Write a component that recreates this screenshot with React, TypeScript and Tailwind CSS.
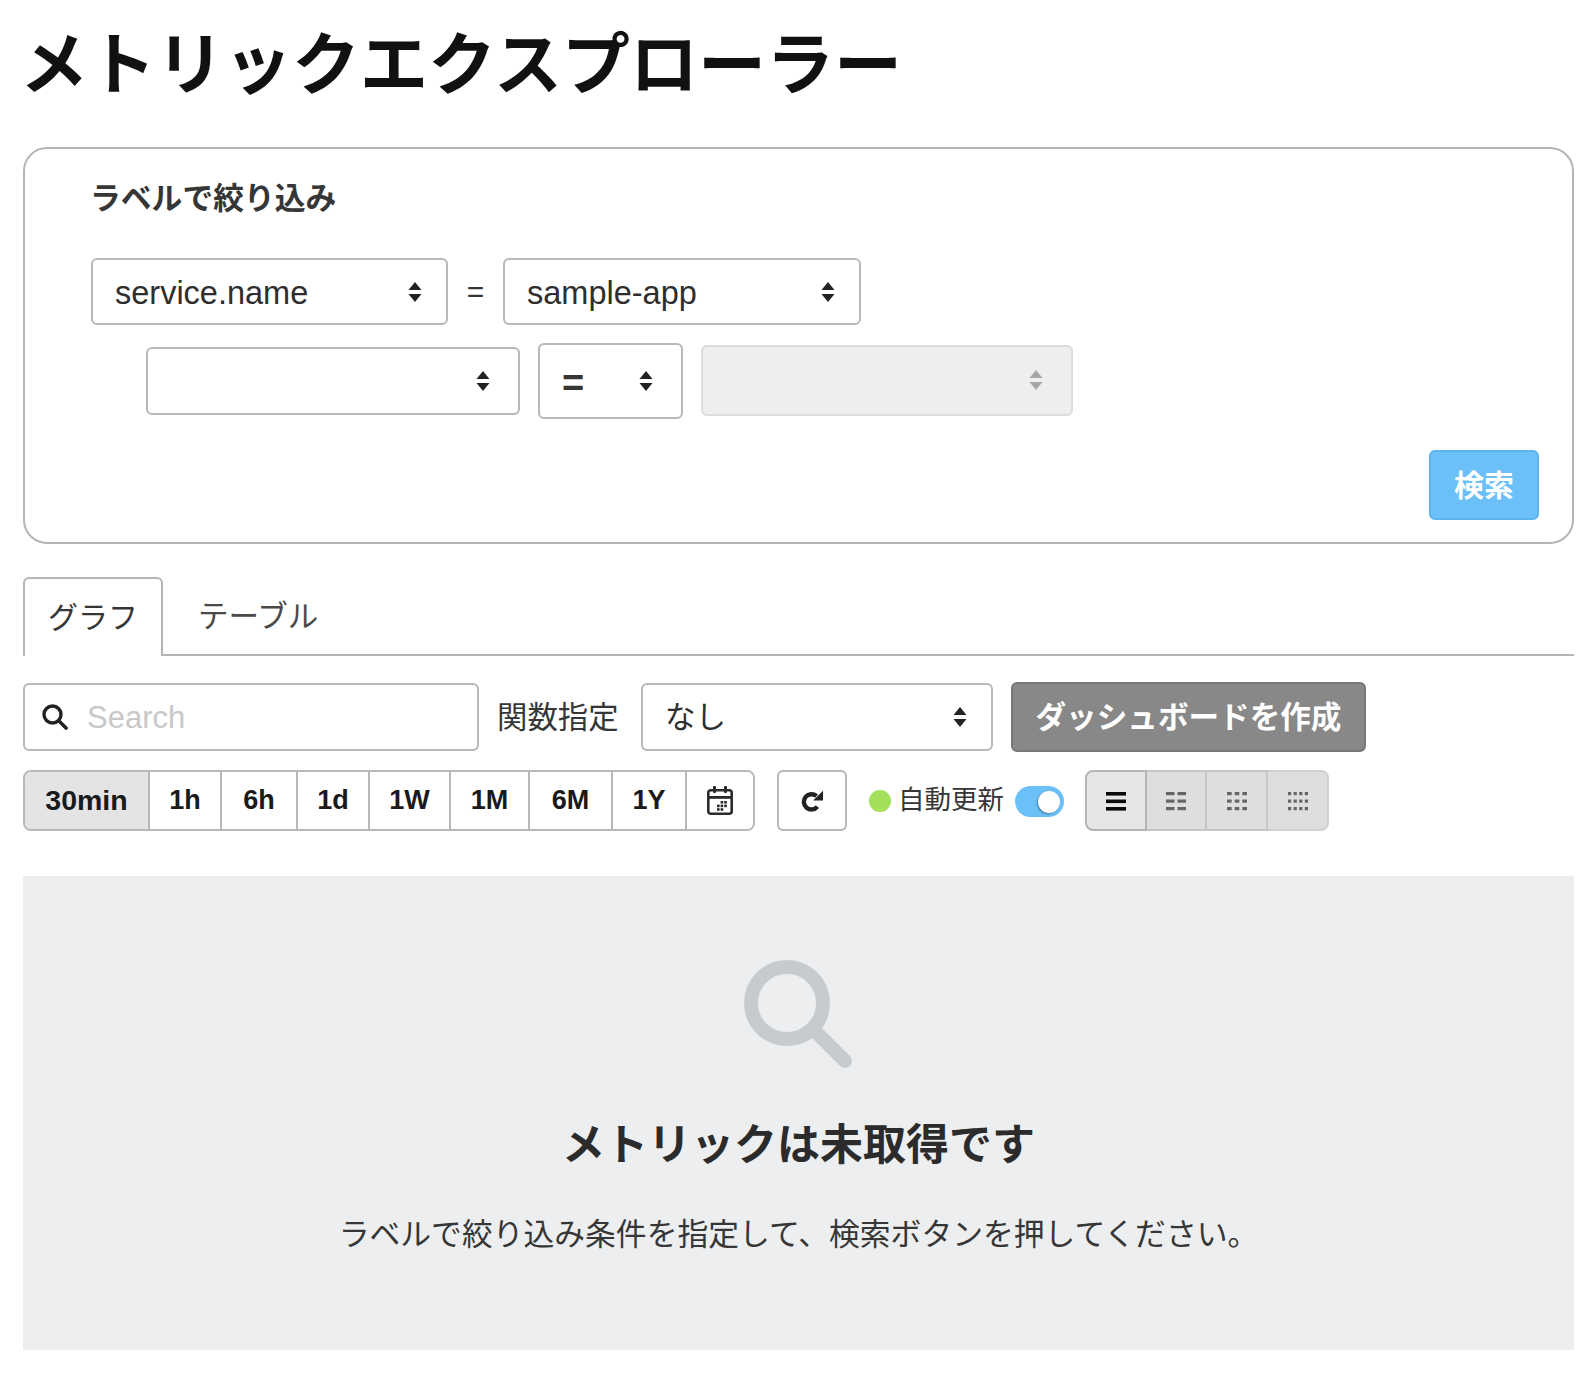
const FONT = "font-['Liberation_Sans','Noto_Sans_CJK_JP',sans-serif]";

const timeRanges = [
  { label: '30min', width: 'w-[125px] text-[28.5px] bg-[#e4e4e4]' },
  { label: '1h', width: 'w-[72px] text-[27px] bg-white' },
  { label: '6h', width: 'w-[76px] text-[27px] bg-white' },
  { label: '1d', width: 'w-[72px] text-[27px] bg-white' },
  { label: '1W', width: 'w-[81px] text-[27px] bg-white' },
  { label: '1M', width: 'w-[79px] text-[27px] bg-white' },
  { label: '6M', width: 'w-[83px] text-[27px] bg-white' },
  { label: '1Y', width: 'w-[74px] text-[27px] bg-white' },
];

function Arrows({ disabled }: { disabled?: boolean }) {
  return (
    <svg width="14" height="20" viewBox="0 0 14 20" className={disabled ? 'text-[#a8a8a8]' : 'text-[#222]'}>
      <path d="M7 0 L13.5 8 L0.5 8 Z M7 20 L13.5 12 L0.5 12 Z" fill="currentColor" />
    </svg>
  );
}

function SelectBox({
  value,
  className,
  disabled,
  arrowClass,
  valueClass = 'text-[32.5px] pt-[4px]',
}: {
  value?: string;
  className: string;
  disabled?: boolean;
  arrowClass: string;
  valueClass?: string;
}) {
  return (
    <div
      className={`flex items-center justify-between rounded-[6px] border-2 pl-[22px] ${arrowClass} ${
        disabled ? 'border-[#dcdcdc] bg-[#eeeeee]' : 'border-[#b8b8b8] bg-white'
      } ${className}`}
    >
      <span className={`leading-none text-[#2e2e2e] ${valueClass}`}>{value}</span>
      <Arrows disabled={disabled} />
    </div>
  );
}

function ViewIcon({ cols, active }: { cols: number; active?: boolean }) {
  const gap = cols === 1 ? 0 : cols === 4 ? 2.4 : 3;
  const w = (20 - gap * (cols - 1)) / cols;
  return (
    <svg width="20" height="20" viewBox="0 0 20 20" className={active ? 'text-[#0a0a0a]' : 'text-[#666]'}>
      {[1, 8.5, 16].map((y) =>
        Array.from({ length: cols }).map((_, i) => (
          <rect key={`${y}-${i}`} x={i * (w + gap)} y={y} width={w} height={active ? 3.6 : 3.2} fill="currentColor" />
        ))
      )}
    </svg>
  );
}

function CalendarIcon() {
  const dots = [
    [1, 0],
    [2, 0],
    [0, 1],
    [1, 1],
    [2, 1],
    [0, 2],
    [1, 2],
  ];
  return (
    <svg width="26" height="29" viewBox="0 0 26 29" fill="none" className="text-[#2b2b2b]">
      <rect x="1.3" y="4.3" width="23.4" height="23.4" rx="2.5" stroke="currentColor" strokeWidth="2.6" />
      <rect x="1" y="10" width="24" height="2.8" fill="currentColor" />
      <rect x="6" y="0" width="3" height="7" rx="1" fill="currentColor" />
      <rect x="17" y="0" width="3" height="7" rx="1" fill="currentColor" />
      {dots.map(([c, r]) => (
        <rect key={`${c}-${r}`} x={10 + c * 3.6} y={15 + r * 3.6} width="2.6" height="2.6" fill="currentColor" />
      ))}
    </svg>
  );
}

function RefreshIcon() {
  return (
    <svg width="22" height="22" viewBox="0 0 22 22" fill="none" className="text-[#222]">
      <path d="M15.5 6.2 A7.6 7.6 0 1 0 16.4 16.6" stroke="currentColor" strokeWidth="4.4" />
      <path d="M22 0.8 L22 10.6 L12.2 10.6 Z" fill="currentColor" />
    </svg>
  );
}

export default function App() {
  return (
    <div className={`${FONT} min-h-screen bg-white pb-[25px] pl-[23px] pr-[22px] pt-[25px] text-[#363636]`}>
      <h1 className="-ml-[3px] mb-[42px] text-[68px] font-bold leading-[80px] text-[#111]">
        メトリックエクスプローラー
      </h1>

      <section className="rounded-[24px] border-2 border-[#b5b5b5] pb-[22px] pl-[66px] pr-[33px] pt-[30px]">
        <h2 className="-ml-[1px] text-[30.8px] font-bold leading-[40px] text-[#363636]">ラベルで絞り込み</h2>

        <div className="mt-[39px] flex items-center">
          <SelectBox value="service.name" className="h-[67px] w-[357px]" arrowClass="pr-[24px]" />
          <span className="w-[55px] text-center text-[30px] leading-none text-[#363636]">=</span>
          <SelectBox value="sample-app" className="h-[67px] w-[358px]" arrowClass="pr-[24px]" />
        </div>

        <div className="ml-[55px] mt-[18px] flex items-center">
          <SelectBox className="h-[68px] w-[374px]" arrowClass="pr-[28px]" />
          <SelectBox
            value="="
            className="ml-[18px] h-[76px] w-[145px]"
            arrowClass="pr-[28px]"
            valueClass="text-[38px] font-bold pt-[4px] text-[#363636]"
          />
          <SelectBox disabled className="mb-[2px] ml-[18px] h-[71px] w-[372px]" arrowClass="pr-[28px]" />
        </div>

        <div className="mt-[31px] flex justify-end">
          <button className="h-[70px] w-[110px] rounded-[6px] border-2 border-[#5cb3ee] bg-[#6cc0f8] text-[30px] font-bold text-white">
            検索
          </button>
        </div>
      </section>

      <div className="mt-[33px] flex h-[79px] border-b-2 border-[#b5b5b5]">
        <div className="flex h-[79px] w-[140px] items-center justify-center rounded-t-[6px] border-2 border-b-0 border-[#b5b5b5] bg-white text-[30px] text-[#363636]">
          グラフ
        </div>
        <div className="flex h-[77px] items-center pl-[35px] pt-[3px] text-[30.5px] text-[#4a4a4a]">テーブル</div>
      </div>

      <div className="mt-[26px] flex items-center">
        <div className="flex h-[68px] w-[456px] items-center gap-[19px] rounded-[6px] border-2 border-[#b8b8b8] bg-white pl-[17px]">
          <svg width="26" height="26" viewBox="0 0 26 26" fill="none" className="text-[#222]">
            <circle cx="10.5" cy="10.5" r="8.5" stroke="currentColor" strokeWidth="3.4" />
            <path d="M17 17 L24 24" stroke="currentColor" strokeWidth="3.6" strokeLinecap="round" />
          </svg>
          <span className="text-[31px] leading-none text-[#c8c8c8]">Search</span>
        </div>
        <span className="ml-[18px] w-[144px] text-[30.4px] leading-none text-[#363636]">関数指定</span>
        <SelectBox value="なし" className="h-[68px] w-[352px]" arrowClass="pr-[24px]" valueClass="text-[30.5px]" />
        <button className="ml-[18px] h-[70px] w-[355px] rounded-[6px] border-2 border-[#777777] bg-[#888888] pt-[2px] text-[30.6px] font-bold text-white">
          ダッシュボードを作成
        </button>
      </div>

      <div className="mt-[18px] flex h-[61px] items-center">
        <div className="flex h-[61px] overflow-hidden rounded-[8px] border-2 border-[#b8b8b8]">
          {timeRanges.map((t) => (
            <div
              key={t.label}
              className={`flex items-center justify-center border-r-2 border-[#b8b8b8] font-bold text-[#1a1a1a] ${t.width}`}
            >
              {t.label}
            </div>
          ))}
          <div className="flex w-[66px] items-center justify-center bg-white">
            <CalendarIcon />
          </div>
        </div>

        <div className="ml-[22px] flex h-[61px] w-[70px] items-center justify-center rounded-[6px] border-2 border-[#b8b8b8] bg-white">
          <RefreshIcon />
        </div>

        <span className="ml-[22px] h-[22px] w-[22px] rounded-full bg-[#a3e05a]" />
        <span className="ml-[7px] w-[108px] text-[26.5px] leading-none text-[#363636]">自動更新</span>
        <div className="ml-[9px] mt-[2px] flex h-[31px] w-[49px] items-center justify-end rounded-full bg-[#6cc0f8] pr-[4px]">
          <span className="h-[22px] w-[22px] rounded-full bg-white shadow-[-1px_1px_2px_rgba(0,0,0,0.35)]" />
        </div>

        <div className="ml-[21px] flex h-[61px]">
          <div className="flex w-[62px] items-center justify-center rounded-l-[8px] border-2 border-[#b5b5b5] bg-[#e6e6e6]">
            <ViewIcon cols={1} active />
          </div>
          <div className="flex w-[60px] items-center justify-center border-y-2 border-r-2 border-[#c6c6c6] bg-[#dedede]">
            <ViewIcon cols={2} />
          </div>
          <div className="flex w-[61px] items-center justify-center border-y-2 border-r-2 border-[#c6c6c6] bg-[#dedede]">
            <ViewIcon cols={3} />
          </div>
          <div className="flex w-[61px] items-center justify-center rounded-r-[8px] border-y-2 border-r-2 border-[#d0d0d0] bg-[#dedede]">
            <ViewIcon cols={4} />
          </div>
        </div>
      </div>

      <div className="mt-[45px] flex h-[474px] flex-col items-center bg-[#edeef0] pt-[84px]">
        <svg width="108" height="108" viewBox="0 0 108 108" fill="none" className="-ml-[2px] text-[#c8cbce]">
          <circle cx="43" cy="43" r="36" stroke="currentColor" strokeWidth="14" />
          <path d="M72 72 L101 101" stroke="currentColor" strokeWidth="14" strokeLinecap="round" />
        </svg>
        <h3 className="mt-[47px] text-[43px] font-bold leading-[60px] text-[#2b2b2b]">メトリックは未取得です</h3>
        <p className="mt-[38px] text-[30.8px] leading-[44px] text-[#363636]">
          ラベルで絞り込み条件を指定して、検索ボタンを押してください。
        </p>
      </div>
    </div>
  );
}
